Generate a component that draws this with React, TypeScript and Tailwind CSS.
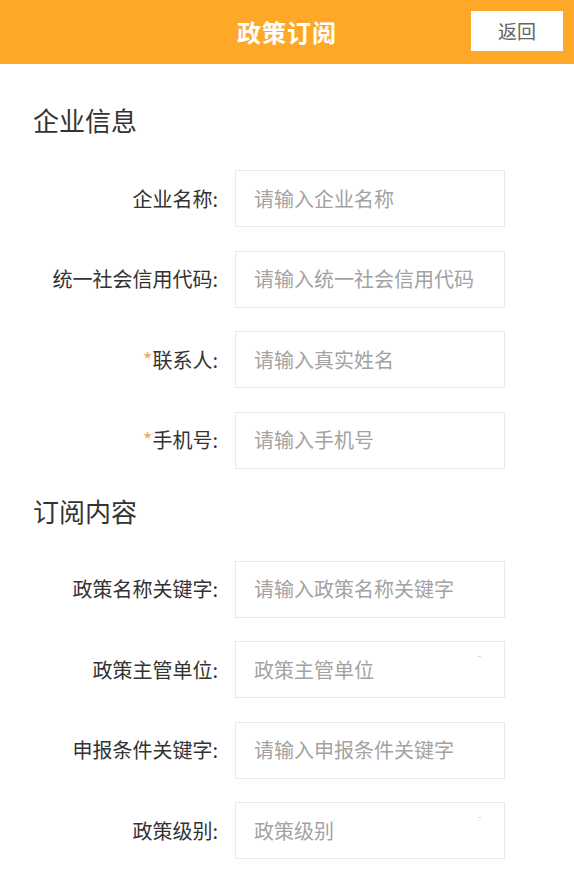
import React from 'react';

const font = { fontFamily: '"Noto Sans CJK SC", "Noto Sans", sans-serif' };

interface Field {
  label: string;
  placeholder: string;
  required?: boolean;
  select?: boolean;
}

const companyFields: Field[] = [
  { label: '企业名称:', placeholder: '请输入企业名称' },
  { label: '统一社会信用代码:', placeholder: '请输入统一社会信用代码' },
  { label: '联系人:', placeholder: '请输入真实姓名', required: true },
  { label: '手机号:', placeholder: '请输入手机号', required: true },
];

const subscribeFields: Field[] = [
  { label: '政策名称关键字:', placeholder: '请输入政策名称关键字' },
  { label: '政策主管单位:', placeholder: '政策主管单位', select: true },
  { label: '申报条件关键字:', placeholder: '请输入申报条件关键字' },
  { label: '政策级别:', placeholder: '政策级别', select: true },
];

function FormRow({ field }: { field: Field }) {
  return (
    <div className="flex items-center">
      <div className="w-[235px] shrink-0 text-right text-[20px] text-[#333] pr-[17px] leading-none">
        {field.required && <span className="text-[#f3a55a]">*</span>}
        {field.label}
      </div>
      <div className="relative w-[270px] h-[57px] border border-[#e9e9e9] bg-white flex items-center pl-[18px]">
        <span className="text-[20px] text-[#a3a3a3] whitespace-nowrap leading-none">{field.placeholder}</span>
        {field.select && (
          <span className="absolute right-[23px] top-[14px] flex flex-col gap-[2px]">
            <span className="block w-[3px] h-[1px] bg-[#d8d8d8]" />
            <span className="block w-[1px] h-[1px] bg-[#e6e6e6]" />
          </span>
        )}
      </div>
    </div>
  );
}

function Section({ title, fields }: { title: string; fields: Field[] }) {
  return (
    <div>
      <h2 className="pl-[33px] h-9 leading-9 text-[26px] text-[#333] mb-8">{title}</h2>
      <div className="flex flex-col gap-[23.5px]">
        {fields.map((f, i) => (
          <FormRow key={i} field={f} />
        ))}
      </div>
    </div>
  );
}

export default function App() {
  return (
    <div className="w-[574px] min-h-[872px] bg-white" style={font}>
      <header className="relative h-16 bg-[#fea829] flex items-center justify-center">
        <h1 className="text-white text-[24px] font-bold tracking-[1px]">政策订阅</h1>
        <button className="absolute right-[11px] top-[11px] w-[92px] h-10 bg-white text-[#666] text-[19px]">
          返回
        </button>
      </header>
      <main className="pt-[38px] flex flex-col gap-6">
        <Section title="企业信息" fields={companyFields} />
        <Section title="订阅内容" fields={subscribeFields} />
      </main>
    </div>
  );
}
